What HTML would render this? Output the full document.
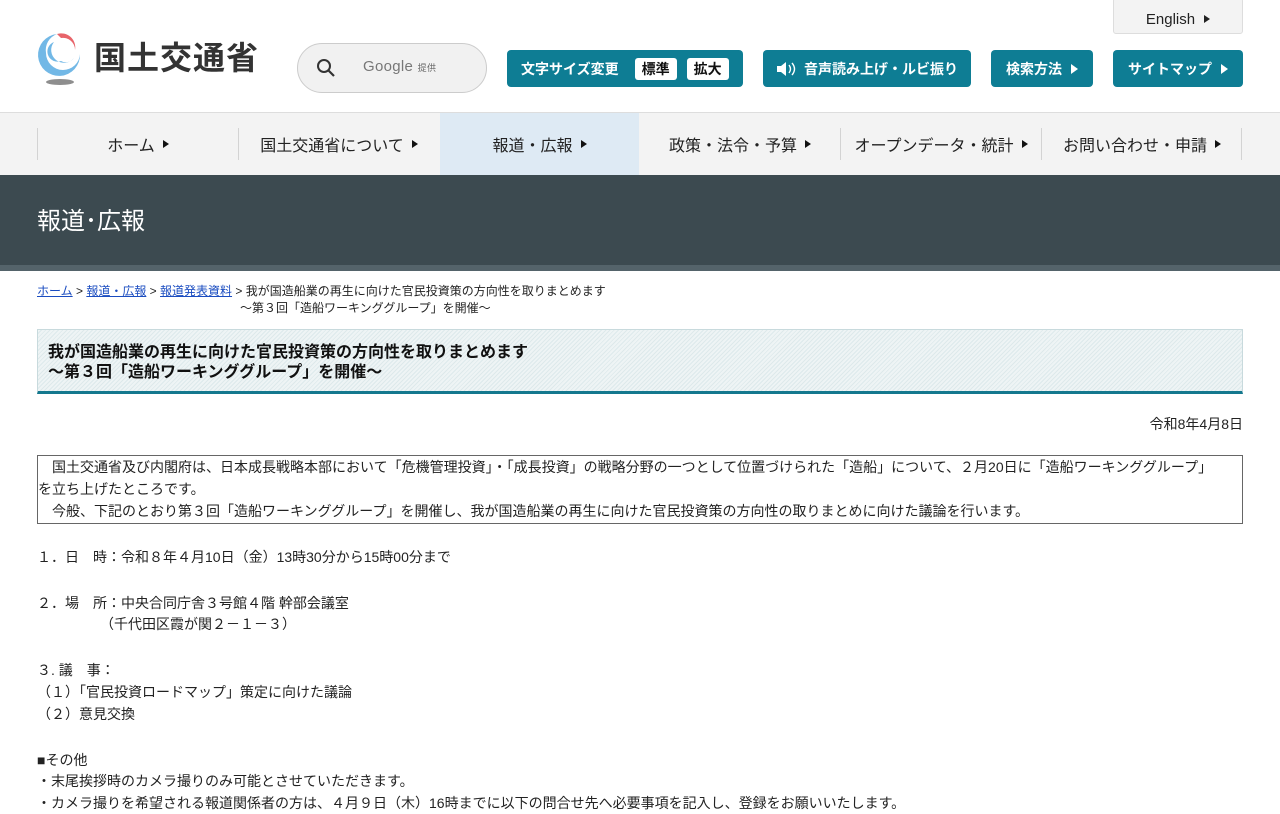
<!DOCTYPE html>
<html lang="ja"><head><meta charset="utf-8">
<style>
*{margin:0;padding:0;box-sizing:border-box}
body{width:1280px;height:800px;overflow:hidden;background:#fff;font-family:"Liberation Sans","Noto Sans CJK JP",sans-serif;color:#222;font-size:14px;position:relative}
.abs{position:absolute}
.btn{position:absolute;top:50px;height:37px;background:#0e7d94;color:#fff;border-radius:4px;font-size:14px;font-weight:bold;display:flex;align-items:center;justify-content:center;white-space:nowrap}
.tri{display:inline-block;width:0;height:0;border-left:7px solid currentColor;border-top:5px solid transparent;border-bottom:5px solid transparent;margin-left:9px}
.nav{position:absolute;top:112px;left:0;width:1280px;height:63px;background:#f3f3f3;border-top:1px solid #ddd}
.ni{position:absolute;top:0;height:62px;display:flex;align-items:center;justify-content:center;font-size:16px;color:#222}
.sep{position:absolute;top:15px;width:1px;height:32px;background:#d3d3d3}
.ni .tri{border-left-width:6px;border-top-width:4px;border-bottom-width:4px;margin-left:8px;color:#111}
p.l{position:absolute;left:37px;font-size:14px;line-height:22px;white-space:nowrap}
a{color:#1a4cc0}
</style></head><body>
<!-- logo -->
<svg class="abs" style="left:30px;top:28px" width="60" height="62" viewBox="0 0 60 62">
<ellipse cx="30" cy="54" rx="14" ry="3" fill="#8e8e8e"/>
<path fill-rule="evenodd" fill="#72b8e6" d="M27 6 A21 21 0 1 0 50 26 A17 17 0 0 1 33 42 A17 17 0 0 1 16 25 A17 17 0 0 1 27 6Z"/>
<path fill-rule="evenodd" fill="#72b8e6" d="M24 14 A12 12 0 0 0 44 30 A10 10 0 0 1 31 33 A10 10 0 0 1 24 14Z"/>
<path fill="#e8646a" d="M27 6 A14 14 0 0 1 45 22 A12 12 0 0 0 31 10 Z"/>
</svg>
<div class="abs" style="left:94px;top:38px;font-size:32px;font-weight:bold;color:#333;letter-spacing:1px;line-height:40px">国土交通省</div>
<!-- search -->
<div class="abs" style="left:297px;top:43px;width:190px;height:50px;border:1px solid #ccc;border-radius:25px;background:#f1f1f1"></div>
<svg class="abs" style="left:316px;top:58px" width="20" height="20" viewBox="0 0 20 20"><circle cx="8" cy="8" r="6" fill="none" stroke="#333" stroke-width="2"/><line x1="12.5" y1="12.5" x2="18" y2="18" stroke="#333" stroke-width="2.2"/></svg>
<div class="abs" style="left:363px;top:58px;font-size:15px;color:#777;letter-spacing:0.3px">Google <span style="font-size:9px;color:#666">提供</span></div>
<!-- English -->
<div class="abs" style="left:1113px;top:-2px;width:130px;height:36px;background:#f3f3f3;border:1px solid #ddd;border-radius:3px;display:flex;align-items:center;justify-content:center;font-size:15px;color:#222;padding-top:6px">English<span class="tri" style="border-left-width:6px;border-top-width:4px;border-bottom-width:4px"></span></div>
<div class="btn" style="left:507px;width:236px;justify-content:flex-start;padding-left:14px">文字サイズ変更
<span style="background:#fff;color:#111;border-radius:3px;padding:1px 7px;margin-left:16px">標準</span><span style="background:#fff;color:#111;border-radius:3px;padding:1px 7px;margin-left:10px">拡大</span></div>
<div class="btn" style="left:763px;width:208px">
<svg width="20" height="16" viewBox="0 0 20 16" style="margin-right:8px"><path d="M1 5h4l5-4v14l-5-4H1z" fill="#fff"/><path d="M13 4q3 4 0 8M16 2q5 6 0 12" stroke="#fff" fill="none" stroke-width="1.4"/></svg>音声読み上げ・ルビ振り</div>
<div class="btn" style="left:991px;width:102px">検索方法<span class="tri"></span></div>
<div class="btn" style="left:1113px;width:130px">サイトマップ<span class="tri"></span></div>
<!-- nav -->
<div class="nav">
<div class="sep" style="left:37px"></div>
<div class="ni" style="left:38px;width:200px">ホーム<span class="tri"></span></div>
<div class="sep" style="left:238px"></div>
<div class="ni" style="left:239px;width:200px">国土交通省について<span class="tri"></span></div>
<div class="ni" style="left:440px;width:199px;background:#deeaf4">報道・広報<span class="tri"></span></div>
<div class="ni" style="left:640px;width:200px">政策・法令・予算<span class="tri"></span></div>
<div class="sep" style="left:840px"></div>
<div class="ni" style="left:841px;width:200px">オープンデータ・統計<span class="tri"></span></div>
<div class="sep" style="left:1041px"></div>
<div class="ni" style="left:1042px;width:200px">お問い合わせ・申請<span class="tri"></span></div>
<div class="sep" style="left:1241px"></div>
</div>
<!-- banner -->
<div class="abs" style="left:0;top:175px;width:1280px;height:96px;background:#3c4a50;border-bottom:6px solid #54636a"></div>
<div class="abs" style="left:37px;top:206px;font-size:24px;color:#fff;line-height:32px">報道･広報</div>
<!-- breadcrumb -->
<div class="abs" style="left:37px;top:283px;font-size:12px;line-height:16px;color:#222;white-space:nowrap"><a href="#">ホーム</a> &gt; <a href="#">報道・広報</a> &gt; <a href="#">報道発表資料</a> &gt; 我が国造船業の再生に向けた官民投資策の方向性を取りまとめます</div>
<div class="abs" style="left:240px;top:300px;font-size:12px;line-height:16px;white-space:nowrap">～第３回「造船ワーキンググループ」を開催～</div>
<!-- title -->
<div class="abs" style="left:37px;top:329px;width:1206px;height:65px;border:1px solid #c8dadd;border-bottom:3px solid #14788e;background:repeating-linear-gradient(135deg,#eef4f5 0 2px,#dde9eb 2px 3px)"></div>
<div class="abs" style="left:48px;top:343px;font-size:16px;font-weight:bold;line-height:20px;color:#111;white-space:nowrap">我が国造船業の再生に向けた官民投資策の方向性を取りまとめます<br>～第３回「造船ワーキンググループ」を開催～</div>
<div class="abs" style="right:37px;top:414px;font-size:14px;line-height:20px">令和8年4月8日</div>
<!-- box -->
<div class="abs" style="left:37px;top:455px;width:1206px;height:69px;border:1px solid #666"></div>
<p class="l" style="top:456px;left:38px">　国土交通省及び内閣府は、日本成長戦略本部において「危機管理投資」・「成長投資」の戦略分野の一つとして位置づけられた「造船」について、２月20日に「造船ワーキンググループ」</p>
<p class="l" style="top:478px;left:38px">を立ち上げたところです。</p>
<p class="l" style="top:500px;left:38px">　今般、下記のとおり第３回「造船ワーキンググループ」を開催し、我が国造船業の再生に向けた官民投資策の方向性の取りまとめに向けた議論を行います。</p>
<p class="l" style="top:546px">１．日　時：令和８年４月10日（金）13時30分から15時00分まで</p>
<p class="l" style="top:592px">２．場　所：中央合同庁舎３号館４階 幹部会議室</p>
<p class="l" style="top:613px">　　　　　（千代田区霞が関２－１－３）</p>
<p class="l" style="top:659px">３. 議　事：</p>
<p class="l" style="top:681px">（１）「官民投資ロードマップ」策定に向けた議論</p>
<p class="l" style="top:703px">（２）意見交換</p>
<p class="l" style="top:749px">■その他</p>
<p class="l" style="top:770px">・末尾挨拶時のカメラ撮りのみ可能とさせていただきます。</p>
<p class="l" style="top:792px">・カメラ撮りを希望される報道関係者の方は、４月９日（木）16時までに以下の問合せ先へ必要事項を記入し、登録をお願いいたします。</p>
</body></html>
